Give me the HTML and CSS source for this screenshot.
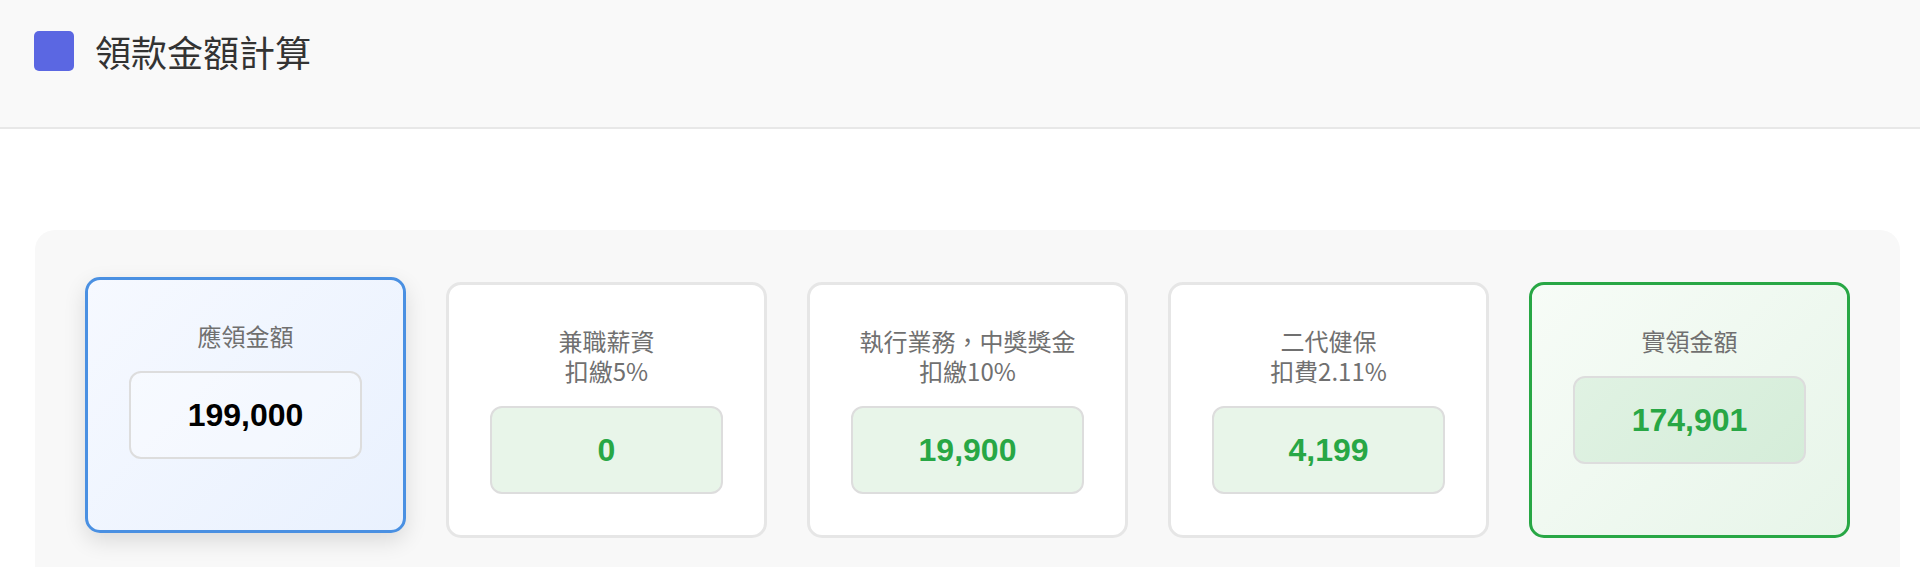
FILE: index.html
```html
<!DOCTYPE html>
<html lang="zh-TW">
<head>
<meta charset="utf-8">
<title>領款金額計算</title>
<link rel="stylesheet" href="styles.css">
</head>
<body>
<header class="page-header">
  <span class="header-icon"></span>
  <h1 class="header-title">領款金額計算</h1>
</header>
<main class="panel">
  <div class="card-grid">
    <div class="card card-primary">
      <div class="card-title"><span class="title-line">應領金額</span></div>
      <div class="value-box value-primary">199,000</div>
    </div>
    <div class="card">
      <div class="card-title"><span class="title-line">兼職薪資</span><span class="title-line">扣繳5%</span></div>
      <div class="value-box">0</div>
    </div>
    <div class="card">
      <div class="card-title"><span class="title-line">執行業務，中獎獎金</span><span class="title-line">扣繳10%</span></div>
      <div class="value-box">19,900</div>
    </div>
    <div class="card">
      <div class="card-title"><span class="title-line">二代健保</span><span class="title-line">扣費2.11%</span></div>
      <div class="value-box">4,199</div>
    </div>
    <div class="card card-result">
      <div class="card-title"><span class="title-line">實領金額</span></div>
      <div class="value-box value-result">174,901</div>
    </div>
  </div>
</main>
</body>
</html>
```

FILE: styles.css
```css
html, body {
  margin: 0;
  padding: 0;
  background: #ffffff;
  font-family: "Noto Sans CJK TC", "Noto Sans", sans-serif;
}

.page-header {
  box-sizing: border-box;
  height: 129px;
  background: #f9f9f9;
  border-bottom: 2px solid #e8e8e8;
  display: flex;
  align-items: flex-start;
  padding: 31px 34px 0 34px;
  gap: 21px;
}

.header-icon {
  width: 40px;
  height: 40px;
  border-radius: 5px;
  background: #5b67e2;
  flex: none;
}

.header-title {
  margin: 0;
  font-size: 36px;
  font-weight: 400;
  line-height: 40px;
  color: #333333;
}

.panel {
  margin: 101px 20px 0 35px;
  padding: 52px 50px 60px 50px;
  background: #f8f8f8;
  border-radius: 20px;
}

.card-grid {
  display: grid;
  grid-template-columns: repeat(5, 1fr);
  gap: 40px;
}

.card {
  background: #ffffff;
  border: 3px solid #e6e6e6;
  border-radius: 15px;
  padding: 41px;
  display: flex;
  flex-direction: column;
  align-items: stretch;
  text-align: center;
}

.card-primary {
  border-color: #4a90e2;
  background: linear-gradient(135deg, #f6f9ff 0%, #e9f1fe 100%);
  transform: translateY(-5px);
  box-shadow: 0 8px 22px rgba(0, 0, 0, 0.12);
}

.card-result {
  border-color: #28a745;
  background: linear-gradient(135deg, #f7fcf7 0%, #e7f5e9 100%);
}

.card-title {
  display: flex;
  flex-direction: column;
  align-items: center;
  margin-bottom: 20px;
  font-size: 24px;
  color: #707070;
}

.title-line {
  display: block;
  height: 30px;
  line-height: 30px;
  white-space: nowrap;
}

.value-box {
  box-sizing: border-box;
  height: 88px;
  border: 2px solid #dddddd;
  border-radius: 12px;
  background: #e8f5e9;
  color: #28a745;
  font-family: "Liberation Sans", Arial, sans-serif;
  font-weight: 700;
  font-size: 32px;
  display: flex;
  align-items: center;
  justify-content: center;
}

.value-primary {
  background: rgba(255, 255, 255, 0.35);
  color: #000000;
}

.value-result {
  background: linear-gradient(135deg, #e0f2e3 0%, #d5edd9 100%);
}
```
